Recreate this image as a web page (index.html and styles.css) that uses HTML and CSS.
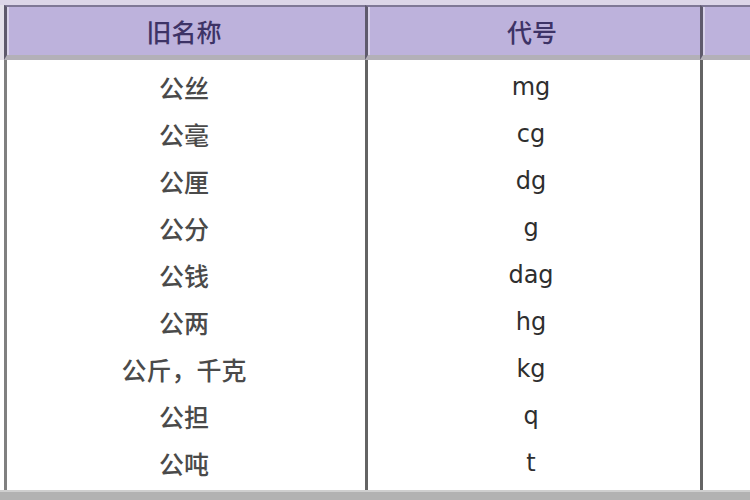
FILE: index.html
```html
<!DOCTYPE html>
<html lang="zh">
<head>
<meta charset="utf-8">
<link rel="stylesheet" href="styles.css">
</head>
<body>
<div class="page">
  <div class="topstrip"></div>
  <div class="table">
    <div class="row head">
      <div class="cell first">旧名称</div>
      <div class="cell">代号</div>
      <div class="cell"></div>
    </div>
    <div class="row tbody">
      <div class="col names first">
        <div class="item">公丝</div>
        <div class="item">公毫</div>
        <div class="item">公厘</div>
        <div class="item">公分</div>
        <div class="item">公钱</div>
        <div class="item">公两</div>
        <div class="item">公斤，千克</div>
        <div class="item">公担</div>
        <div class="item">公吨</div>
      </div>
      <div class="col codes">
        <div class="item">mg</div>
        <div class="item">cg</div>
        <div class="item">dg</div>
        <div class="item">g</div>
        <div class="item">dag</div>
        <div class="item">hg</div>
        <div class="item">kg</div>
        <div class="item">q</div>
        <div class="item">t</div>
      </div>
      <div class="col extra"></div>
    </div>
    <div class="bottom"></div>
  </div>
</div>
</body>
</html>
```
FILE: styles.css
```css
html, body {
  margin: 0;
  padding: 0;
  background: #ffffff;
  overflow: hidden;
}
.page {
  width: 750px;
  height: 500px;
  overflow: hidden;
  background: #e4e1ea;
}
.topstrip {
  height: 5px;
  background: #dcd6e8;
}
.table {
  width: 900px;
  display: flex;
  flex-direction: column;
}
.row {
  display: grid;
  grid-template-columns: 365px 335px 200px;
}
.first {
  margin-left: 4px;
}
.head .cell {
  height: 48px;
  background: #bdb2dc;
  border-top: 2px solid #7f7896;
  border-bottom: 5px solid #b3b0b8;
  border-left: 3px solid #5e5a6c;
  box-shadow: inset 2px 0 0 #d9d3ea;
  display: flex;
  align-items: center;
  justify-content: center;
  font-family: "Noto Sans CJK SC", sans-serif;
  font-size: 25px;
  font-weight: 500;
  color: #3d3366;
  padding-right: 4px;
}
.tbody {
  background: #fff;
}
.col {
  border-left: 3px solid #646464;
  padding: 3px 0 4px;
  display: flex;
  flex-direction: column;
  background: #ffffff;
}
.names {
  border-left-color: #808080;
}
.item {
  height: 47px;
  display: flex;
  align-items: center;
  justify-content: center;
  color: #3a3a3a;
}
.names .item {
  font-family: "Noto Sans CJK SC", sans-serif;
  font-size: 25px;
  font-weight: 500;
  color: #4a4a4a;
  padding-right: 4px;
}
.codes .item {
  font-family: "DejaVu Sans", sans-serif;
  font-size: 24px;
  color: #2e2e2e;
  padding-right: 6px;
}
.bottom {
  height: 20px;
  background: #b2b2b2;
  border-top: 2px solid #cfcfcf;
}
```
